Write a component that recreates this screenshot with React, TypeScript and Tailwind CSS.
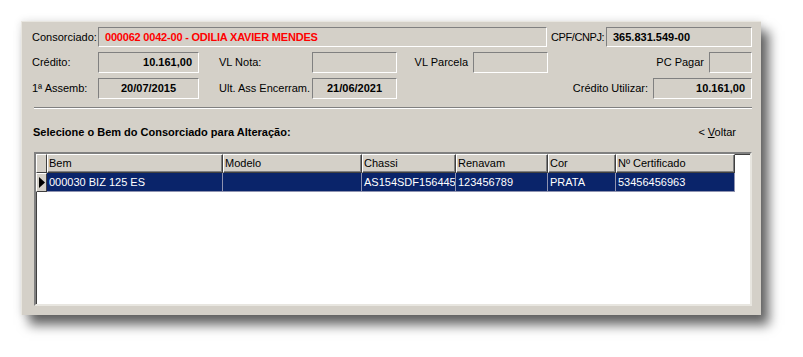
import React from 'react';

const FONT = { fontFamily: '"Liberation Sans", Arial, sans-serif' };

const sunken = 'border border-t-[#808080] border-l-[#808080] border-b-white border-r-white bg-[#d4d0c8]';

function Field({ w, h = 'h-[21px]', align = 'justify-end', className = '', children }: { w: string; h?: string; align?: string; className?: string; children?: React.ReactNode }) {
  return (
    <div className={`${w} ${h} ${sunken} flex items-center ${align} shrink-0 text-[11px] font-bold whitespace-nowrap ${className}`}>
      {children}
    </div>
  );
}

const COLUMNS = [
  { title: 'Bem', w: 'w-[176px]', value: '000030 BIZ 125 ES' },
  { title: 'Modelo', w: 'w-[139px]', value: '' },
  { title: 'Chassi', w: 'w-[94px]', value: 'AS154SDF156445F' },
  { title: 'Renavam', w: 'w-[92px]', value: '123456789' },
  { title: 'Cor', w: 'w-[68px]', value: 'PRATA' },
  { title: 'Nº Certificado', w: 'w-[119px]', value: '53456456963' },
];

export default function App() {
  return (
    <div className="w-[803px] h-[357px] bg-white overflow-hidden pt-[21px] pl-[21px]" style={FONT}>
      <div className="w-[740px] h-[294px] bg-[#d4d0c8] border-t border-l border-t-[#e8e6e0] border-l-[#e8e6e0] shadow-[0_0_8px_rgba(0,0,0,0.12),8px_10px_11px_rgba(0,0,0,0.6)] pl-[10px] pr-[9px] pt-[5px] text-black text-[11px]">
        {/* row 1 */}
        <div className="flex items-center h-[20px]">
          <div className="w-[66px] shrink-0">Consorciado:</div>
          <Field w="w-[449px]" h="h-[20px]" align="justify-start" className="pl-[6px] text-[#ff0000] tracking-[-0.2px]">
            000062 0042-00 - ODILIA XAVIER MENDES
          </Field>
          <div className="w-[59px] shrink-0 pl-[4px] whitespace-nowrap tracking-[-0.4px]">CPF/CNPJ:</div>
          <Field w="w-[146px]" h="h-[20px]" align="justify-start" className="pl-[6px]">
            365.831.549-00
          </Field>
        </div>

        {/* row 2 */}
        <div className="flex items-center h-[21px] mt-[5px]">
          <div className="w-[66px] shrink-0">Crédito:</div>
          <Field w="w-[101px]" className="pr-[6px]">10.161,00</Field>
          <div className="w-[113px] shrink-0 pl-[20px]">VL Nota:</div>
          <Field w="w-[85px]" />
          <div className="w-[76px] shrink-0 text-right pr-[5px]">VL Parcela</div>
          <Field w="w-[75px]" />
          <div className="w-[161px] shrink-0 text-right pr-[5px]">PC Pagar</div>
          <Field w="w-[43px]" />
        </div>

        {/* row 3 */}
        <div className="flex items-center h-[21px] mt-[5px]">
          <div className="w-[66px] shrink-0">1ª Assemb:</div>
          <Field w="w-[101px]" align="justify-center">20/07/2015</Field>
          <div className="w-[113px] shrink-0 pl-[20px] whitespace-nowrap">Ult. Ass Encerram.</div>
          <Field w="w-[85px]" align="justify-center">21/06/2021</Field>
          <div className="w-[256px] shrink-0 text-right pr-[5px]">Crédito Utilizar:</div>
          <Field w="w-[99px]" className="pr-[6px]">10.161,00</Field>
        </div>

        {/* separator */}
        <div className="ml-[2px] mt-[8px] w-[718px] border-t border-b border-t-[#808080] border-b-white" />

        {/* heading + voltar */}
        <div className="flex items-center justify-between h-[20px] mt-[13px] pl-[1px] pr-[16px]">
          <div className="font-bold">Selecione o Bem do Consorciado para Alteração:</div>
          <div>
            &lt; <span className="underline">V</span>oltar
          </div>
        </div>

        {/* grid */}
        <div className="ml-[2px] mt-[10px] w-[718px] h-[154px] bg-white border-2 border-t-[#808080] border-l-[#808080] border-b-[#e8e6e0] border-r-[#e8e6e0] shadow-[inset_1px_1px_0_#404040]">
          <div className="flex h-[19px]">
            <div className="w-[11px] shrink-0 bg-[#d4d0c8] border-t border-l border-t-white border-l-white border-r border-b border-r-[#404040] border-b-[#404040]" />
            {COLUMNS.map((c) => (
              <div
                key={c.title}
                className={`${c.w} shrink-0 bg-[#d4d0c8] border-t border-l border-t-white border-l-white border-r border-b border-r-[#404040] border-b-[#404040] shadow-[inset_-1px_-1px_0_#808080] pl-[1px] leading-[16px] overflow-hidden whitespace-nowrap`}
              >
                {c.title}
              </div>
            ))}
          </div>
          <div className="flex h-[19px]">
            <div className="w-[11px] shrink-0 bg-[#d4d0c8] border-t border-l border-t-white border-l-white border-r border-b border-r-[#404040] border-b-[#404040] flex items-center justify-center">
              <svg width="6" height="11" viewBox="0 0 6 11">
                <path d="M0 0 L6 5.5 L0 11 Z" fill="#000" />
              </svg>
            </div>
            {COLUMNS.map((c) => (
              <div
                key={c.title}
                className={`${c.w} shrink-0 bg-[#0a246a] text-white border-r border-b border-r-[#8f93b0] border-b-[#8f93b0] pl-[2px] leading-[18px] overflow-hidden whitespace-nowrap`}
              >
                {c.value}
              </div>
            ))}
          </div>
        </div>
      </div>
    </div>
  );
}
